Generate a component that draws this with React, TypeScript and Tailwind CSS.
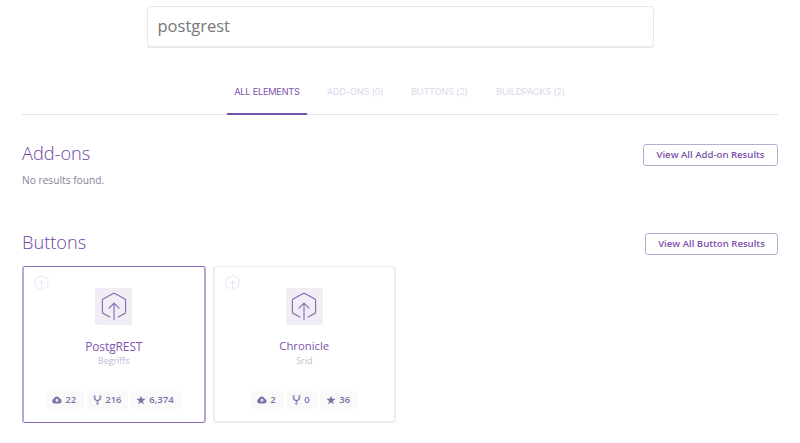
import type { ReactNode } from "react";

function ButtonMark({ className, stroke }: { className: string; stroke: number }) {
  return (
    <svg viewBox="0 0 26 30" fill="none" stroke="currentColor" strokeWidth={stroke} strokeLinejoin="round" strokeLinecap="round" className={className}>
      <path d="M8.8 25.9 1.9 22.2Q1 21.7 1 20.7V8.4Q1 7.6 1.7 7.2L12.2 1.6Q13 1.2 13.8 1.6L24.3 7.2Q25 7.6 25 8.4V20.7Q25 21.7 24.1 22.2L17.2 25.9" />
      <path d="M13 28.5V11.5M7.8 16.6 13 11.4 18.2 16.6" />
    </svg>
  );
}

function CloudIcon() {
  return (
    <svg viewBox="0 0 10 8" className="h-[8px] w-[10px]">
      <path fill="currentColor" d="M2.5 7.4A2.4 2.4 0 0 1 1.7 2.8 3.1 3.1 0 0 1 7.6 2.5 2.5 2.5 0 0 1 7.6 7.4Z" />
      <path fill="#f9f9fa" d="M5 2.6 7 4.6H5.6V6.1H4.4V4.6H3Z" />
    </svg>
  );
}

function ForkIcon() {
  return (
    <svg viewBox="0 0 9 10" fill="none" stroke="currentColor" className="h-[10px] w-[9px]">
      <path strokeWidth="1.3" d="M1.6 2V3.3Q1.6 4.3 2.6 4.8L4.5 5.9 6.4 4.8Q7.4 4.3 7.4 3.3V2M4.5 5.7V8" />
      <g strokeWidth=".8" fill="#f9f9fa">
        <circle cx="1.6" cy="1.5" r=".9" />
        <circle cx="7.4" cy="1.5" r=".9" />
        <circle cx="4.5" cy="8.6" r=".9" />
      </g>
    </svg>
  );
}

function StarIcon() {
  return (
    <svg viewBox="0 0 10 10" className="h-[10px] w-[10px]">
      <path fill="currentColor" d="m5 .4 1.1 3.4h3.6L6.8 5.9l1.1 3.5L5 7.3 2.1 9.4l1.1-3.5L.3 3.8h3.6Z" />
    </svg>
  );
}

function Stat({ icon, value, width }: { icon: ReactNode; value: string; width: string }) {
  return (
    <span className={`flex h-[18px] items-center rounded-[2px] bg-[#f9f9fa] pl-[6px] ${width}`}>
      {icon}
      <span className="ml-[3.5px]">{value}</span>
    </span>
  );
}

type CardProps = { name: string; author: string; selected?: boolean; nameSize: string; stats: string[]; widths: string[] };

function Card({ name, author, selected, nameSize, stats, widths }: CardProps) {
  return (
    <article className={`flex h-[157px] w-[183.5px] flex-col rounded-[3px] border-x-2 border-t ${selected ? "border-b border-x-[#b7a5d6] border-t-[#8a6bb8] border-b-[#8a6bb8]" : "border-b-2 border-[#ebedf4]"}`}>
      <div className="flex h-[58px] justify-between pt-[8px] pr-[9px] pl-[10px]">
        <ButtonMark stroke={1.6} className="h-[16px] w-[15px] text-[#e3e1ee]" />
        <div className="mt-[13px] flex h-[37px] w-[37px] items-center justify-center rounded-[2px] bg-[#f1edf5] text-[#8a65ae]">
          <ButtonMark stroke={1.15} className="h-[29px] w-[26px]" />
        </div>
        <div className="w-4" />
      </div>
      <h3 className={`mt-[13px] text-center leading-[16px] text-[#8055ad] ${nameSize}`}>{name}</h3>
      <p className="mt-px text-center text-[8.9px] leading-[12px] text-[#bdbbd5]">{author}</p>
      <div className="mt-[24px] flex justify-center gap-[2px] text-[9.5px] leading-[18px] font-semibold text-[#7474a8]">
        <Stat icon={<CloudIcon />} value={stats[0]} width={widths[0]} />
        <Stat icon={<ForkIcon />} value={stats[1]} width={widths[1]} />
        <Stat icon={<StarIcon />} value={stats[2]} width={widths[2]} />
      </div>
    </article>
  );
}

function SectionHead({ title, action, width }: { title: string; action: string; width: string }) {
  return (
    <div className="flex h-[22px] items-start justify-between">
      <h2 className="text-[18.2px] leading-[18px] font-light text-[#6f459f]">{title}</h2>
      <button className={`h-[22px] rounded-[3px] border border-[#bda9d6] text-[9.6px] leading-[20px] font-semibold text-[#7b52ab] ${width}`}>
        {action}
      </button>
    </div>
  );
}

export default function App() {
  return (
    <main className="h-[443px] overflow-hidden bg-white px-[22px] pt-[6px] font-['Open_Sans',sans-serif]">
      <input
        readOnly
        value="postgrest"
        className="mx-auto block h-[42px] w-[507px] rounded-[3px] border border-b-2 border-[#e9e9e9] px-[10px] pb-[2px] text-[16.5px] text-[#777] outline-none"
      />
      <nav className="mt-[22px] flex h-[45px] justify-start border-b border-[#dfe3ee] pl-[205px] font-['Inter',sans-serif] text-[9.2px] leading-[44px] tracking-[-0.22px] whitespace-nowrap text-[#d9dae8]">
        <span className="-mb-px h-[45px] w-[80px] border-b-2 border-[#7256a7] text-center text-[#7b52ab]">ALL ELEMENTS</span>
        <span className="ml-[20px] w-[56px]">ADD-ONS (0)</span>
        <span className="ml-[28px] w-[57px]">BUTTONS (2)</span>
        <span className="ml-[28px]">BUILDPACKS (2)</span>
      </nav>
      <section className="mt-[29px] h-[89px]">
        <SectionHead title="Add-ons" action="View All Add-on Results" width="w-[135px]" />
        <p className="mt-[6px] text-[10.2px] leading-[16px] text-[#858599]">No results found.</p>
      </section>
      <section>
        <SectionHead title="Buttons" action="View All Button Results" width="w-[133px]" />
        <div className="mt-[11px] flex gap-[7px]">
          <Card selected name="PostgREST" author="Begriffs" nameSize="text-[11.8px]" stats={["22", "216", "6,374"]} widths={["w-[39px]", "w-[41px]", "w-[52px]"]} />
          <Card name="Chronicle" author="Srid" nameSize="text-[11.3px]" stats={["2", "0", "36"]} widths={["w-[33px]", "w-[32px]", "w-[38px]"]} />
        </div>
      </section>
    </main>
  );
}
